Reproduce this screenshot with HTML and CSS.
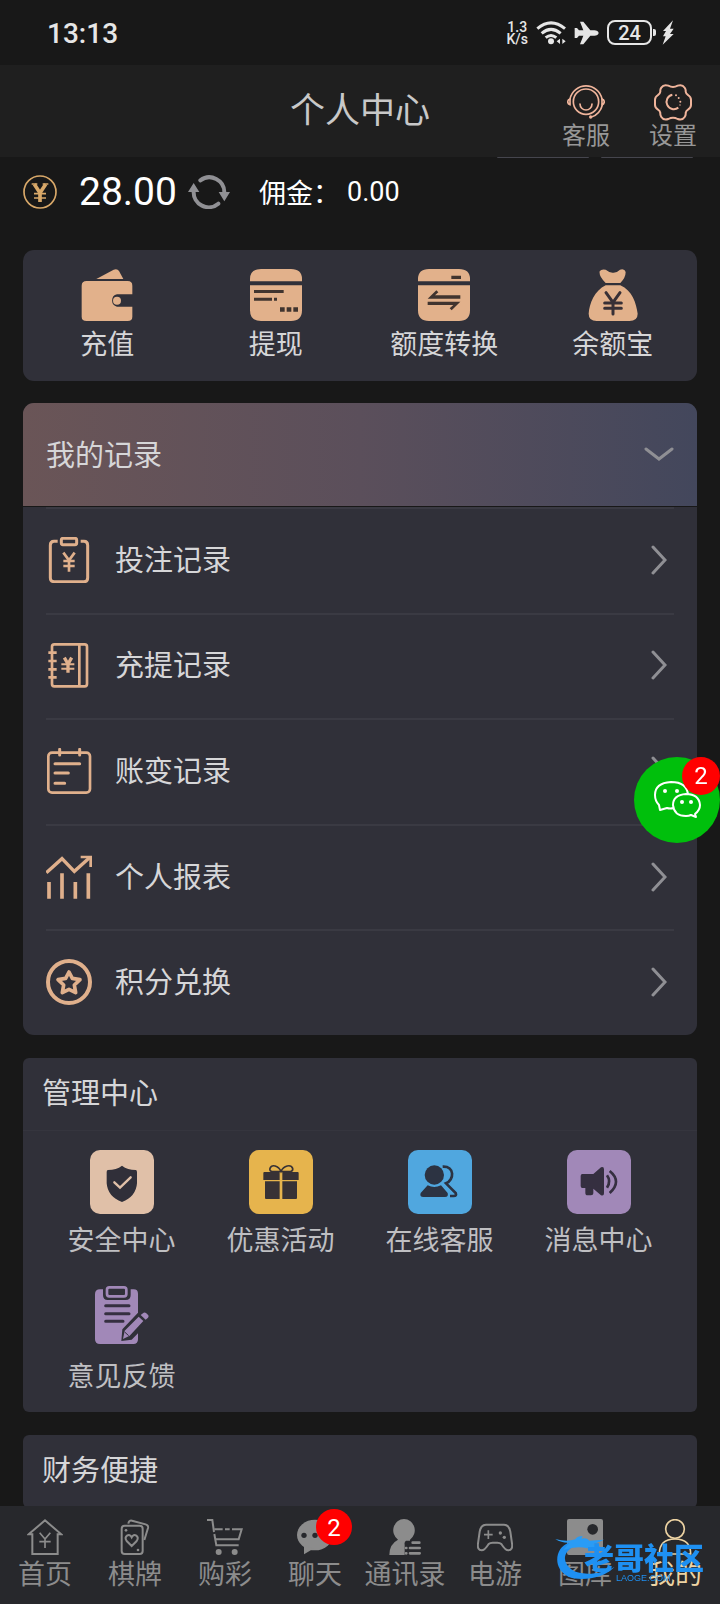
FILE: index.html
```html
<!DOCTYPE html>
<html lang="zh-CN">
<head>
<meta charset="utf-8">
<meta name="viewport" content="width=device-width, initial-scale=1">
<title>个人中心</title>
<link rel="stylesheet" href="styles.css">
</head>
<body>
<div class="app">
  <div class="status">
    <span class="status-time">13:13</span>
    <div class="status-icons">
      <span class="net-speed">1.3<br>K/s</span>
      <svg class="wifi" viewBox="532 60 90 72" aria-hidden="true">
        <g fill="none" stroke="#e6e6e6" stroke-width="9">
          <path d="M536 83Q577 48 619 83"/><path d="M549 97Q577 73 606 97"/><path d="M561 110Q577 97 593 110"/>
        </g>
        <circle cx="577" cy="121" r="9" fill="#e6e6e6"/>
        <path d="M594 121l10-8v16zM621 121l-10-8v16z" fill="#e6e6e6"/>
      </svg>
      <svg class="plane" viewBox="643 60 75 72" aria-hidden="true">
        <path d="M717 96Q715 104 704 104H692L671 130H661L671 104H658L652 111H645V81H652L658 88H671L661 62H671L692 88H704Q715 88 717 96Z" fill="#e6e6e6"/>
      </svg>
      <span class="battery">24</span>
      <svg class="bolt" viewBox="903 59 36 75" aria-hidden="true">
        <path d="M936 60L906 92H915L906 108H914L905 133L938 101H927L938 85H927Z" fill="#e6e6e6"/>
      </svg>
    </div>
  </div>

  <header class="topbar">
    <h1 class="title">个人中心</h1>
    <div class="top-actions">
      <a class="top-action" href="#service">
        <svg class="top-icon" viewBox="621 252 114 114" aria-hidden="true">
          <g fill="none" stroke="#efb49b" stroke-width="5" stroke-linecap="round">
            <path d="M630 300A49 49 0 0 1 726 300"/>
            <path d="M728 316C722 338 710 350 694 354"/>
            <circle cx="678" cy="308" r="38"/>
            <path d="M660 315A18 18 0 0 0 696 315"/>
            <path d="M630 300C621 303 621 314 630 317ZM726 300C735 303 735 314 726 317Z"/>
          </g>
          <circle cx="692" cy="354" r="5" fill="#efb49b"/>
        </svg>
        <span>客服</span>
      </a>
      <a class="top-action" href="#settings">
        <svg class="top-icon" viewBox="882 254 114 114" aria-hidden="true">
          <g fill="none" stroke="#efb49b" stroke-width="6" stroke-linejoin="round">
            <path d="M939 266Q946 266 953 262Q967 257 974 268Q978 274 977 280Q978 287 984 290Q993 296 993 304V320Q993 328 984 334Q978 337 977 344Q978 350 974 356Q967 367 953 362Q946 358 939 358Q932 358 925 362Q911 367 904 356Q900 350 901 344Q900 337 894 334Q885 328 885 320V304Q885 296 894 290Q900 287 901 280Q900 274 904 268Q911 257 925 262Q932 266 939 266Z"/>
            <path d="M955 328A22 22 0 1 1 937 289"/>
          </g>
          <g fill="#efb49b"><circle cx="948" cy="291" r="3"/><circle cx="956" cy="299" r="3"/><circle cx="961" cy="310" r="3"/><circle cx="960" cy="320" r="2"/></g>
        </svg>
        <span>设置</span>
      </a>
    </div>
  </header>

  <main class="content">
    <div class="pill-edges"><span class="pill-edge"></span><span class="pill-edge"></span></div>
    <section class="balance">
      <svg class="coin" viewBox="69 525 102 102" aria-hidden="true">
        <g fill="none" stroke="#d8a869">
          <circle cx="120" cy="576" r="48" stroke-width="5"/>
          <path d="M103 553L120 579L137 553M120 579V606" stroke-width="11"/>
          <path d="M95 552H112M128 552H145M102 581H138M102 594H138" stroke-width="5"/>
        </g>
      </svg>
      <span class="amount">28.00</span>
      <button class="refresh" type="button" aria-label="刷新">
        <svg viewBox="564 525 126 102" aria-hidden="true">
          <g fill="none" stroke="#909094" stroke-width="12" stroke-linecap="round">
            <path d="M601 541A45 45 0 0 1 673 578"/><path d="M655 611A45 45 0 0 1 581 574"/>
          </g>
          <path d="M656 576H690L673 604ZM564 576H598L581 549Z" fill="#909094"/>
        </svg>
      </button>
      <span class="commission">佣金：</span>
      <span class="commission-value">0.00</span>
    </section>

    <nav class="card wallet">
      <a class="wallet-item" href="#deposit">
        <svg class="wallet-icon" viewBox="243 86 156 156" aria-hidden="true">
          <g fill="#e2b18b">
            <path d="M289 116L341 88Q352 84 357 92L370 116Z"/>
            <path d="M260 122H383Q397 122 397 136V162H351A19 19 0 0 0 351 199H397V229Q397 242 383 242H260Q245 242 245 229V136Q245 122 260 122Z"/>
            <circle cx="351" cy="181" r="12"/>
          </g>
        </svg>
        <span>充值</span>
      </a>
      <a class="wallet-item" href="#withdraw">
        <svg class="wallet-icon" viewBox="747 86 156 156" aria-hidden="true">
          <path d="M747 123V116Q747 86 780 86H870Q903 86 903 116V123ZM747 135H903V210Q903 242 870 242H780Q747 242 747 210Z" fill="#e2b18b"/>
          <path d="M759 149h89v9h-89zM759 172h54v9h-54zM819 172h9v9h-9zM837 201h14v13h-14zM857 201h14v13h-14zM877 201h14v13h-14z" fill="#40342f"/>
        </svg>
        <span>提现</span>
      </a>
      <a class="wallet-item" href="#transfer">
        <svg class="wallet-icon" viewBox="174 86 156 156" aria-hidden="true">
          <path d="M174 123V116Q174 86 207 86H297Q330 86 330 116V123ZM174 135H330V210Q330 242 297 242H207Q174 242 174 210Z" fill="#e2b18b"/>
          <path d="M274 106h29v10h-29zM203 175L229 150L235 156L225 165H301V175ZM301 184L275 210L269 204L280 194H203V184Z" fill="#40342f"/>
        </svg>
        <span>额度转换</span>
      </a>
      <a class="wallet-item" href="#yuebao">
        <svg class="wallet-icon" viewBox="679 86 156 156" aria-hidden="true">
          <path d="M735 128Q714 108 717 93Q722 85 735 88Q748 98 757 97Q768 98 778 88Q792 84 795 95Q795 112 779 128ZM735 135H779C815 150 827 190 831 220Q831 242 806 242H708Q684 242 684 220C686 190 702 150 735 135Z" fill="#e2b18b"/>
          <path d="M736 157L757 186L778 157M757 186V221M732 188H782M732 204H782" fill="none" stroke="#383036" stroke-width="9" stroke-linecap="round"/>
        </svg>
        <span>余额宝</span>
      </a>
    </nav>

    <section class="card records">
      <button class="records-head" type="button" aria-expanded="true">
        <span>我的记录</span>
        <svg class="chevron-down" viewBox="0 0 30 18" aria-hidden="true"><path d="M2 5L15 15L28 5"/></svg>
      </button>
      <div class="records-list">
        <a class="record" href="#bets">
          <svg class="record-icon" viewBox="138 441 138 138" aria-hidden="true">
            <path d="M173 454H162Q151 454 151 466V563Q151 575 163 575H252Q263 575 263 563V466Q263 454 252 454H242" stroke-width="9"/>
            <rect x="184" y="445" width="46" height="19" rx="5" stroke-width="9"/>
            <path d="M190 488L207 511L224 488M207 511V545M190 513H224M190 528H224" stroke-width="8"/>
          </svg>
          <span class="record-name">投注记录</span>
          <svg class="chevron" viewBox="0 0 16 30" aria-hidden="true"><path d="M2 2L14 15L2 28"/></svg>
        </a>
        <a class="record" href="#funds">
          <svg class="record-icon" viewBox="138 760 138 138" aria-hidden="true">
            <rect x="156" y="767" width="105" height="126" rx="7" stroke-width="8"/>
            <path d="M238 766V893M145 792H170M145 817H170M145 842H170M145 866H170" stroke-width="8"/>
            <path d="M193 807L204 826L215 807M204 826V852" stroke-width="10"/>
            <path d="M184 827H223M184 840H223" stroke-width="6"/>
          </svg>
          <span class="record-name">充提记录</span>
          <svg class="chevron" viewBox="0 0 16 30" aria-hidden="true"><path d="M2 2L14 15L2 28"/></svg>
        </a>
        <a class="record" href="#changes">
          <svg class="record-icon" viewBox="138 84 138 138" aria-hidden="true">
            <rect x="145" y="98" width="125" height="120" rx="11" stroke-width="8"/>
            <path d="M179 88V105M239 88V105M165 131H239M165 159H205M165 190H194" stroke-width="9" stroke-linecap="round"/>
          </svg>
          <span class="record-name">账变记录</span>
          <svg class="chevron" viewBox="0 0 16 30" aria-hidden="true"><path d="M2 2L14 15L2 28"/></svg>
        </a>
        <a class="record" href="#report">
          <svg class="record-icon" viewBox="138 402 138 138" aria-hidden="true">
            <path d="M139 458L186 416L223 454L270 412" stroke-width="10"/>
            <path d="M242 411H272V441" stroke-width="8"/>
            <path d="M147 486V536M186 460V536M226 486V536M265 460V536" stroke-width="11"/>
          </svg>
          <span class="record-name">个人报表</span>
          <svg class="chevron" viewBox="0 0 16 30" aria-hidden="true"><path d="M2 2L14 15L2 28"/></svg>
        </a>
        <a class="record" href="#points">
          <svg class="record-icon" viewBox="138 717 138 138" aria-hidden="true">
            <circle cx="207" cy="786" r="63" stroke-width="12"/>
            <path d="M207 756L217 775L240 779L223 795L227 818L207 808L187 818L191 795L174 779L197 775Z" stroke-width="11" stroke-linejoin="round"/>
          </svg>
          <span class="record-name">积分兑换</span>
          <svg class="chevron" viewBox="0 0 16 30" aria-hidden="true"><path d="M2 2L14 15L2 28"/></svg>
        </a>
      </div>
    </section>

    <section class="panel">
      <h2 class="panel-head">管理中心</h2>
      <div class="tiles">
        <a class="tile" href="#security">
          <svg class="tile-icon tile-sand" viewBox="267 330 192 192" aria-hidden="true">
            <path d="M363 377Q380 390 404 390Q408 390 408 396V430Q405 470 363 486Q320 470 317 430V396Q317 390 321 390Q346 390 363 377Z" fill="#302f39"/>
            <path d="M340 427L357 443L389 412" fill="none" stroke="#e0c0a8" stroke-width="7" stroke-linecap="round"/>
          </svg>
          <span>安全中心</span>
        </a>
        <a class="tile" href="#promo">
          <svg class="tile-icon tile-gold" viewBox="744 330 192 192" aria-hidden="true">
            <path d="M790 396H836V420H787V399Q787 396 790 396ZM844 396H890Q893 396 893 399V420H844ZM792 424H836V477H795Q792 477 792 474ZM844 424H888V474Q888 477 885 477H844Z" fill="#383235"/>
            <path d="M840 394C825 394 803 400 807 385C812 372 832 376 840 394C848 376 870 372 875 385C878 400 855 394 840 394" fill="none" stroke="#383235" stroke-width="5"/>
          </svg>
          <span>优惠活动</span>
        </a>
        <a class="tile" href="#support">
          <svg class="tile-icon tile-blue" viewBox="141 330 192 192" aria-hidden="true">
            <circle cx="220" cy="405" r="29" fill="#2c3342"/>
            <path d="M200 436Q220 446 240 436L260 459Q263 471 252 471H187Q175 471 179 459Z" fill="#2c3342"/>
            <path d="M245 380C282 378 280 420 255 430L284 459Q288 468 278 468H267" fill="none" stroke="#2c3342" stroke-width="8"/>
          </svg>
          <span>在线客服</span>
        </a>
        <a class="tile" href="#messages">
          <svg class="tile-icon tile-purple" viewBox="618 330 192 192" aria-hidden="true">
            <path d="M664 402H697L720 382Q729 379 729 388V460Q729 469 720 466L697 446V460Q697 466 690 466H680Q673 466 673 458V444H664Q659 444 659 438V408Q659 402 664 402Z" fill="#352f40"/>
            <path d="M738 406Q751 424 738 443M746 393Q784 424 746 459" fill="none" stroke="#352f40" stroke-width="8"/>
          </svg>
          <span>消息中心</span>
        </a>
        <a class="tile" href="#feedback">
          <svg class="tile-icon" viewBox="267 48 192 192" aria-hidden="true">
            <path d="M297 58H306V75Q306 90 320 90H374Q389 90 389 75V58H398Q411 58 411 71V128L364 178L361 213L392 209L411 190V208Q411 222 397 222H297Q282 222 282 208V72Q282 58 297 58Z" fill="#a188b8"/>
            <rect x="318" y="52" width="58" height="27" rx="7" fill="none" stroke="#a188b8" stroke-width="8"/>
            <path d="M314 107H384M314 131H384M314 154H366" fill="none" stroke="#352f40" stroke-width="9" stroke-linecap="round"/>
            <path d="M371 182L413 140L427 153L386 197L366 207ZM419 135L428 128Q432 126 436 130L442 136Q444 140 441 143L434 149Z" fill="#a188b8"/>
            <path d="M371 186L383 197" fill="none" stroke="#352f40" stroke-width="3"/>
          </svg>
          <span>意见反馈</span>
        </a>
      </div>
    </section>

    <section class="panel">
      <h2 class="panel-head">财务便捷</h2>
    </section>
  </main>

  <nav class="tabbar">
    <a class="tab" href="#home">
      <svg class="tab-icon" viewBox="81 87 108 108" aria-hidden="true">
        <g fill="none" stroke="#8c8c8c" stroke-width="6">
          <path d="M86 133L135 91L184 133H173V192H97V133Z"/>
          <path d="M119 128L135 147L151 128M135 147V174M118 155H152" stroke-width="5"/>
        </g>
      </svg>
      <span>首页</span>
    </a>
    <a class="tab" href="#cards">
      <svg class="tab-icon" viewBox="351 87 108 108" aria-hidden="true">
        <g fill="none" stroke="#8c8c8c" stroke-width="6">
          <rect x="365" y="107" width="63" height="85" rx="9"/>
          <path d="M385 101Q387 90 396 92L437 103Q446 106 444 114L433 150"/>
          <path d="M395 168L380 153Q373 143 381 137Q390 132 395 142Q400 132 409 137Q417 143 410 153Z"/>
        </g>
        <circle cx="378" cy="121" r="4" fill="#8c8c8c"/><circle cx="414" cy="180" r="4" fill="#8c8c8c"/>
      </svg>
      <span>棋牌</span>
    </a>
    <a class="tab" href="#lottery">
      <svg class="tab-icon" viewBox="621 87 108 108" aria-hidden="true">
        <g fill="none" stroke="#8c8c8c" stroke-width="6">
          <path d="M621 90H637L642 126M643 132L649 166H716"/>
          <path d="M643 118H668M675 118H689M696 118H725L716 148H648"/>
        </g>
        <circle cx="656" cy="186" r="9" fill="#8c8c8c"/><circle cx="704" cy="186" r="9" fill="#8c8c8c"/>
      </svg>
      <span>购彩</span>
    </a>
    <a class="tab" href="#chat">
      <svg class="tab-icon" viewBox="891 87 108 108" aria-hidden="true">
        <ellipse cx="945" cy="135" rx="54" ry="46" fill="#8c8c8c"/>
        <path d="M912 166V193L940 176Z" fill="#8c8c8c"/>
        <g fill="#27282c"><circle cx="912" cy="136" r="8"/><circle cx="945" cy="136" r="8"/><circle cx="978" cy="136" r="8"/></g>
      </svg>
      <span>聊天</span>
      <span class="tab-badge">2</span>
    </a>
    <a class="tab" href="#contacts">
      <svg class="tab-icon" viewBox="81 87 108 108" aria-hidden="true">
        <path d="M132 87A33 34 0 0 1 150 149V152H138Q132 156 134 164V195H88Q88 162 114 149A33 34 0 0 1 132 87Z" fill="#8c8c8c"/>
        <path d="M158 158H178M150 174H179M150 190H179M138 174H139M138 190H139" fill="none" stroke="#8c8c8c" stroke-width="8" stroke-linecap="round"/>
      </svg>
      <span>通讯录</span>
    </a>
    <a class="tab" href="#games">
      <svg class="tab-icon" viewBox="351 87 108 108" aria-hidden="true">
        <g fill="none" stroke="#8c8c8c" stroke-width="6">
          <path d="M378 104H432Q447 104 451 125L456 160Q459 181 445 181Q436 181 424 162Q420 158 412 158H398Q390 158 386 162Q374 181 365 181Q351 181 354 160L359 125Q363 104 378 104Z"/>
          <path d="M385 121V147M372 134H398" stroke-width="5"/>
        </g>
        <circle cx="421" cy="129" r="5" fill="#8c8c8c"/><circle cx="433" cy="142" r="5" fill="#8c8c8c"/>
      </svg>
      <span>电游</span>
    </a>
    <a class="tab" href="#gallery">
      <svg class="tab-icon" viewBox="621 87 108 108" aria-hidden="true">
        <rect x="621" y="87" width="108" height="108" rx="6" fill="#8c8c8c"/>
        <circle cx="698" cy="118" r="16" fill="#27282c"/>
      </svg>
      <span>图库</span>
    </a>
    <a class="tab tab-active" href="#mine" aria-current="page">
      <svg class="tab-icon" viewBox="891 87 108 108" aria-hidden="true">
        <g fill="none" stroke="#edd3a3" stroke-width="5">
          <circle cx="945" cy="117" r="28"/><path d="M898 192Q898 147 945 147Q992 147 992 192Z"/>
        </g>
      </svg>
      <span>我的</span>
    </a>
  </nav>
</div>

<button class="float" type="button" aria-label="微信客服">
  <svg class="float-icon" viewBox="0 0 86 86" aria-hidden="true">
    <g fill="#00bf0c" stroke="#fff" stroke-width="2" stroke-linejoin="round">
      <path d="M25 48L26 53L33 51Q36 52 40 51Q54 49 54 38Q53 25 37 25Q21 26 21 38Q21 44 25 48Z"/>
      <path d="M61 57Q66 53 66 48Q65 37 52 37Q39 38 39 48Q40 59 52 59Q55 59 57 58L62 60Z"/>
    </g>
    <g fill="#fff"><circle cx="31" cy="34" r="2"/><circle cx="43" cy="34" r="2"/><circle cx="48" cy="45" r="2"/><circle cx="57" cy="45" r="2"/></g>
  </svg>
  <span class="float-badge">2</span>
</button>

<div class="watermark">
  <svg class="watermark-logo" viewBox="585 135 180 141" aria-hidden="true">
    <path d="M626 158C585 172 576 236 625 260C662 275 734 265 764 230C730 252 662 260 634 238C606 216 608 186 644 168Z" fill="#1e90f2"/>
    <path d="M586 147Q620 157 646 148Q652 138 668 138L664 146Q680 142 688 152L732 149Q712 158 700 163Q722 166 728 180Q704 170 682 175Q650 166 610 180Q622 164 630 158Q606 160 586 147Z" fill="#2a9cf5"/>
  </svg>
  <div class="watermark-words">
    <span class="watermark-name">老哥社区</span>
    <span class="watermark-sub">LAOGE.COM</span>
  </div>
</div>
</body>
</html>
```
FILE: styles.css
```css
* {
  box-sizing: border-box;
}

body {
  margin: 0;
  background: #181818;
  color: #d6d6d8;
  font-family: Roboto, "Noto Sans CJK SC", sans-serif;
  font-size: 27px;
}

a {
  color: inherit;
  text-decoration: none;
}

button {
  border: 0;
  padding: 0;
  background: none;
  color: inherit;
  font: inherit;
}

svg {
  display: block;
  flex: none;
}

.app {
  height: 100vh;
  display: flex;
  flex-direction: column;
}

/* Status bar */
.status {
  flex: none;
  height: 65px;
  padding: 0 46px 0 47px;
  display: flex;
  align-items: center;
  justify-content: space-between;
  color: #e6e6e6;
}

.status-time {
  padding-top: 2px;
  font-size: 28px;
  font-weight: 500;
}

.status-icons {
  display: flex;
  align-items: center;
  gap: 8px;
}

.net-speed {
  font-size: 14px;
  font-weight: 500;
  line-height: 12px;
  text-align: center;
}

.wifi {
  width: 30px;
  height: 24px;
}

.plane {
  width: 25px;
  height: 24px;
}

.battery {
  position: relative;
  width: 45px;
  height: 25px;
  margin-right: 2px;
  border: 2px solid #e6e6e6;
  border-radius: 8px;
  font-size: 20px;
  font-weight: 500;
  line-height: 22px;
  text-align: center;
}

.battery::after {
  content: "";
  position: absolute;
  right: -6px;
  top: 7px;
  width: 3px;
  height: 7px;
  border-radius: 0 2px 2px 0;
  background: #e6e6e6;
}

.bolt {
  width: 12px;
  height: 25px;
}

/* Title bar */
.topbar {
  flex: none;
  height: 92px;
  padding: 0 23px;
  display: grid;
  grid-template-columns: 1fr auto 1fr;
  align-items: center;
  background: #1f1f1f;
}

.title {
  grid-column: 2;
  margin: 0;
  padding-top: 1px;
  color: #c8c8c8;
  font-size: 35px;
  font-weight: 400;
  line-height: 48px;
}

.top-actions {
  justify-self: end;
  display: flex;
  gap: 39px;
  padding-top: 12px;
}

.top-action {
  display: flex;
  flex-direction: column;
  align-items: center;
  color: #979797;
  font-size: 24px;
  line-height: 30px;
}

.top-icon {
  width: 38px;
  height: 38px;
}

/* Scrolling content */
.content {
  flex: 1;
  min-height: 0;
  overflow-y: auto;
  scrollbar-width: none;
  padding: 0 23px;
}

.pill-edges {
  display: flex;
  justify-content: flex-end;
  gap: 12px;
  padding-right: 4px;
}

.pill-edge {
  width: 92px;
  height: 1px;
  border-radius: 0 0 4px 4px;
  background: #45454d;
}

.balance {
  display: flex;
  align-items: center;
  height: 68px;
  margin-bottom: 24px;
  color: #fff;
}

.coin {
  width: 34px;
  height: 34px;
}

.amount {
  margin: 0 11px 0 22px;
  font-size: 39px;
}

.refresh svg {
  width: 42px;
  height: 34px;
}

.commission {
  margin: 0 7px 0 29px;
  padding-bottom: 2px;
}

.card {
  border-radius: 11px;
  background: #303039;
  margin-bottom: 22px;
}

.wallet {
  display: grid;
  grid-template-columns: repeat(4, 1fr);
  padding: 19px 0 17px;
}

.wallet-item {
  display: flex;
  flex-direction: column;
  align-items: center;
  gap: 5px;
  line-height: 38px;
}

.wallet-icon {
  width: 52px;
  height: 52px;
}

.records {
  margin-bottom: 23px;
  overflow: hidden;
}

.records-head {
  width: 100%;
  height: 104px;
  padding: 0 23px 3px;
  display: flex;
  align-items: center;
  justify-content: space-between;
  background: linear-gradient(90deg, #6a5557, #5b4f5b 50%, #43475c);
  border-bottom: 1px solid #181818;
  font-size: 29px;
}

.chevron-down {
  width: 30px;
  height: 18px;
}

.chevron {
  width: 16px;
  height: 30px;
  margin-left: auto;
  margin-right: 7px;
}

.chevron path,
.chevron-down path {
  fill: none;
  stroke: #8f8f94;
  stroke-width: 3px;
  stroke-linecap: round;
}

.records-list {
  display: grid;
  grid-auto-rows: 1fr;
  min-height: 528px;
  padding: 0 23px;
}

.record {
  display: flex;
  align-items: center;
  gap: 23px;
  padding-bottom: 2px;
  border-top: 2px solid #3a3a43;
  font-size: 29px;
}

.record-name {
  padding-bottom: 4px;
}

.record-icon {
  width: 46px;
  height: 46px;
  fill: none;
  stroke: #e0b08c;
}

/* Panels */
.panel {
  margin-bottom: 23px;
  border-radius: 6px;
  background: #303039;
}

.panel-head {
  height: 73px;
  margin: 0;
  padding: 0 19px;
  border-bottom: 1px solid #35353e;
  font-size: 29px;
  font-weight: 400;
  line-height: 72px;
}

.tiles {
  display: grid;
  grid-template-columns: repeat(4, 1fr);
  row-gap: 26px;
  padding: 19px 19px 16px;
}

.tile {
  display: flex;
  flex-direction: column;
  align-items: center;
  gap: 8px;
  color: #bfbfc2;
  line-height: 38px;
}

.tile-icon {
  width: 64px;
  height: 64px;
  border-radius: 10px;
}

.tile-sand {
  background: #e0c0a8;
}

.tile-gold {
  background: #e6b44d;
}

.tile-blue {
  background: #50a7df;
}

.tile-purple {
  background: #a188b8;
}

/* Bottom tabs */
.tabbar {
  flex: none;
  display: grid;
  grid-template-columns: repeat(8, 1fr);
  height: 98px;
  padding-top: 13px;
  background: #27282c;
  color: #8c8c8c;
}

.tab {
  position: relative;
  display: flex;
  flex-direction: column;
  align-items: center;
  gap: 3px;
  line-height: 34px;
  white-space: nowrap;
}

.tab-active {
  color: #edd3a3;
}

.tab-icon {
  width: 36px;
  height: 36px;
}

.tab-badge {
  position: absolute;
  top: -10px;
  right: 8px;
  width: 36px;
  height: 36px;
  border-radius: 50%;
  background: #f00;
  color: #fff;
  font-size: 24px;
  line-height: 38px;
  text-align: center;
}

/* Floating chat button */
.float {
  position: fixed;
  top: 757px;
  right: 0;
  width: 86px;
  height: 86px;
  border-radius: 50%;
  background: #00bf0c;
}

.float-icon {
  width: 86px;
  height: 86px;
}

.float-badge {
  position: absolute;
  top: 0;
  right: 0;
  width: 38px;
  height: 38px;
  border-radius: 50%;
  background: #f00;
  color: #fff;
  font-size: 24px;
  line-height: 39px;
  text-align: center;
}

/* Community mark over the tabs */
.watermark {
  position: fixed;
  right: 16px;
  bottom: 22px;
  display: flex;
  pointer-events: none;
  color: #1e90f2;
}

.watermark-logo {
  width: 60px;
  height: 47px;
}

.watermark-words {
  display: flex;
  flex-direction: column;
  margin: 9px 0 0 -31px;
}

.watermark-name {
  font-size: 30px;
  font-weight: 900;
  line-height: 30px;
}

.watermark-sub {
  padding-left: 32px;
  font-family: "Liberation Sans", sans-serif;
  font-size: 9px;
  line-height: 8px;
}
```
